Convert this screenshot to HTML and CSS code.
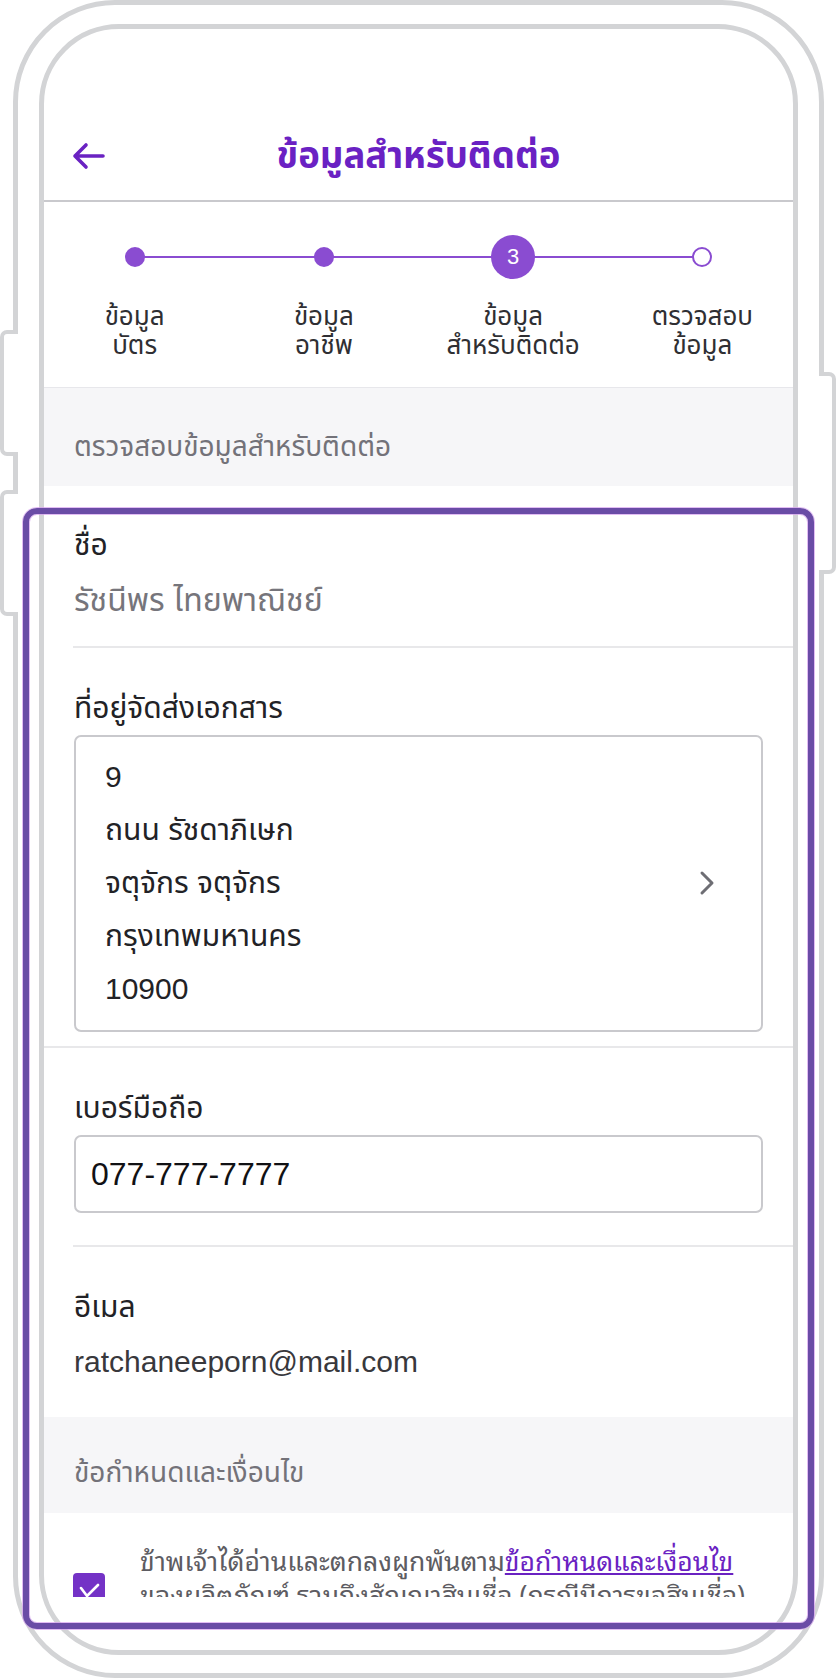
FILE: index.html
```html
<!DOCTYPE html>
<html lang="th">
<head>
<meta charset="utf-8">
<title>ข้อมูลสำหรับติดต่อ</title>
<link rel="stylesheet" href="styles.css">
</head>
<body>
<div class="stage">
  <div class="btn btn-left btn-l1"></div>
  <div class="btn btn-left btn-l2"></div>
  <div class="btn btn-right btn-r1"></div>
  <div class="phone">
    <div class="screen">
      <div class="content">
        <header class="header">
          <div class="header-row">
            <div class="back">
              <svg width="34" height="28" viewBox="0 0 34 28" aria-hidden="true">
                <path d="M3 14 H31 M14 3 L3 14 L14 25" fill="none" stroke="#6a22c2" stroke-width="3.6" stroke-linecap="round" stroke-linejoin="round"/>
              </svg>
            </div>
            <h1 class="title">ข้อมูลสำหรับติดต่อ</h1>
            <div></div>
          </div>
        </header>

        <section class="stepper">
          <div class="steps">
            <div class="step">
              <div class="dot-wrap"><span class="dot done"></span></div>
              <div class="step-label">ข้อมูล<br>บัตร</div>
            </div>
            <div class="step">
              <div class="dot-wrap"><span class="dot done"></span></div>
              <div class="step-label">ข้อมูล<br>อาชีพ</div>
            </div>
            <div class="step">
              <div class="dot-wrap"><span class="dot current">3</span></div>
              <div class="step-label">ข้อมูล<br>สำหรับติดต่อ</div>
            </div>
            <div class="step">
              <div class="dot-wrap"><span class="dot todo"></span></div>
              <div class="step-label">ตรวจสอบ<br>ข้อมูล</div>
            </div>
          </div>
        </section>

        <div class="section-head first">ตรวจสอบข้อมูลสำหรับติดต่อ</div>

        <div class="field field-name">
          <div class="label">ชื่อ</div>
          <div class="value muted">รัชนีพร ไทยพาณิชย์</div>
        </div>

        <div class="field field-address">
          <div class="label">ที่อยู่จัดส่งเอกสาร</div>
          <div class="address-box">
            <div class="address-lines">
              <div>9</div>
              <div>ถนน รัชดาภิเษก</div>
              <div>จตุจักร จตุจักร</div>
              <div>กรุงเทพมหานคร</div>
              <div>10900</div>
            </div>
            <svg class="chev" width="18" height="26" viewBox="0 0 18 26" aria-hidden="true">
              <path d="M4 3 L14 13 L4 23" fill="none" stroke="#6e6e74" stroke-width="3" stroke-linecap="round" stroke-linejoin="round"/>
            </svg>
          </div>
        </div>

        <div class="field field-phone">
          <div class="label">เบอร์มือถือ</div>
          <div class="input-box">077-777-7777</div>
        </div>

        <div class="field field-email">
          <div class="label">อีเมล</div>
          <div class="value dark">ratchaneeporn@mail.com</div>
        </div>

        <div class="section-head second">ข้อกำหนดและเงื่อนไข</div>

        <div class="terms">
          <span class="checkbox">
            <svg width="32" height="32" viewBox="0 0 32 32" aria-hidden="true">
              <path d="M8 15 L14 23 L25 12" fill="none" stroke="#ffffff" stroke-width="2.6" stroke-linecap="round" stroke-linejoin="round"/>
            </svg>
          </span>
          <p class="terms-text">ข้าพเจ้าได้อ่านและตกลงผูกพันตาม<a href="#" class="link">ข้อกำหนดและเงื่อนไข</a><br>ของผลิตภัณฑ์ รวมถึงสัญญาสินเชื่อ (กรณีมีการขอสินเชื่อ)</p>
        </div>
      </div>
      <div class="home-space"></div>
    </div>
  </div>
  <div class="highlight"></div>
</div>
</body>
</html>
```

FILE: styles.css
```css
html, body {
  margin: 0;
  padding: 0;
  background: #ffffff;
}
body {
  width: 837px;
  height: 1680px;
  overflow: hidden;
  font-family: "Liberation Sans", "Noto Sans Thai", "Noto Sans", sans-serif;
  color: #2a2a2e;
}
.stage {
  position: relative;
  width: 837px;
  height: 1680px;
}
.phone {
  position: relative;
  margin-left: 13px;
  width: 811px;
  height: 1678px;
  box-sizing: border-box;
  border: 5px solid #d3d4d6;
  border-radius: 102px;
  padding: 19px 21px 18px 21px;
  background: #ffffff;
}
.btn {
  position: absolute;
  z-index: 2;
  background: #ffffff;
  box-sizing: border-box;
  border: 4px solid #d3d4d6;
}
.btn-left {
  left: 0;
  width: 18px;
  border-right: none;
  border-radius: 7px 0 0 7px;
}
.btn-l1 { top: 330px; height: 126px; }
.btn-l2 { top: 490px; height: 126px; }
.btn-right {
  left: 819px;
  width: 17px;
  border-left: none;
  border-radius: 0 7px 7px 0;
}
.btn-r1 { top: 372px; height: 202px; }

.screen {
  height: 1631px;
  box-sizing: border-box;
  border: 5px solid #d3d4d6;
  border-radius: 80px;
  overflow: hidden;
  background: #ffffff;
}
.content {
  height: 1568px;
  overflow: hidden;
}
.home-space { height: 53px; }

/* header */
.header {
  height: 173px;
  box-sizing: border-box;
  padding-top: 101px;
  border-bottom: 2px solid #c9c9cd;
}
.header-row {
  display: grid;
  grid-template-columns: 1fr auto 1fr;
  align-items: center;
  height: 52px;
}
.back {
  padding-left: 28px;
  display: flex;
  align-items: center;
}
.title {
  margin: 0;
  font-size: 36.5px;
  font-weight: 700;
  color: #6a21c3;
  line-height: 52px;
}

/* stepper */
.stepper {
  height: 186px;
  box-sizing: border-box;
  padding-top: 33px;
  border-bottom: 1px solid #e7e7eb;
}
.steps {
  position: relative;
  display: grid;
  grid-template-columns: repeat(4, 1fr);
  margin: 0 -4px;
}
.steps::before {
  content: "";
  position: absolute;
  left: 12.5%;
  right: 12.5%;
  top: 21px;
  height: 2px;
  background: #8a4cd1;
}
.step {
  display: flex;
  flex-direction: column;
  align-items: center;
}
.dot-wrap {
  position: relative;
  height: 44px;
  display: flex;
  align-items: center;
  justify-content: center;
}
.dot {
  display: flex;
  align-items: center;
  justify-content: center;
  box-sizing: border-box;
  border-radius: 50%;
}
.dot.done {
  width: 20px;
  height: 20px;
  background: #8a4cd1;
}
.dot.current {
  width: 44px;
  height: 44px;
  background: #8a4cd1;
  color: #ffffff;
  font-size: 22px;
}
.dot.todo {
  width: 20px;
  height: 20px;
  background: #ffffff;
  border: 2px solid #8a4cd1;
}
.step-label {
  margin-top: 23px;
  text-align: center;
  font-size: 26px;
  line-height: 29px;
  color: #2f2f33;
}

/* section heads */
.section-head {
  background: #f6f6f8;
  color: #737279;
  font-size: 28px;
  line-height: 36px;
  padding-left: 30px;
}
.section-head.first {
  height: 98px;
  box-sizing: border-box;
  padding-top: 41px;
}
.section-head.second {
  height: 96px;
  box-sizing: border-box;
  padding-top: 38px;
}

/* fields */
.field {
  padding-left: 30px;
}
.label {
  font-size: 30px;
  line-height: 36px;
  color: #222226;
}
.value {
  font-size: 30px;
  line-height: 36px;
}
.value.muted { color: #76757b; font-size: 32px; }
.value.dark { color: #38383c; }

.field-name {
  height: 162px;
  box-sizing: border-box;
  padding-top: 41px;
  position: relative;
}
.field-name .value { margin-top: 19px; }
.field-name::after,
.field-phone::after {
  content: "";
  position: absolute;
  left: 29px;
  right: 0;
  bottom: 0;
  height: 2px;
  background: #e8e8ea;
}
.field-address {
  height: 400px;
  box-sizing: border-box;
  padding-top: 42px;
  border-bottom: 2px solid #e8e8ea;
}
.address-box {
  margin-top: 9px;
  width: 689px;
  height: 297px;
  box-sizing: border-box;
  border: 2px solid #c9c9cd;
  border-radius: 7px;
  padding: 13px 45px 14px 29px;
  display: flex;
  align-items: center;
  justify-content: space-between;
  font-size: 30px;
  line-height: 53px;
  color: #222226;
}
.address-lines { align-self: stretch; }
.field-phone {
  height: 199px;
  box-sizing: border-box;
  padding-top: 42px;
  position: relative;
}
.input-box {
  margin-top: 9px;
  width: 689px;
  height: 78px;
  box-sizing: border-box;
  border: 2px solid #c9c9cd;
  border-radius: 7px;
  padding-left: 15px;
  display: flex;
  align-items: center;
  font-size: 32px;
  color: #111114;
}
.field-email {
  height: 170px;
  box-sizing: border-box;
  padding-top: 42px;
}
.field-email .value { margin-top: 19px; }

/* terms */
.terms {
  display: flex;
  align-items: flex-start;
  padding: 29px 0 0 29px;
}
.checkbox {
  flex: none;
  width: 32px;
  height: 24px;
  margin-top: 31px;
  overflow: hidden;
  background: #7432c6;
  border-radius: 4px 4px 0 0;
  display: block;
}
.checkbox svg { display: block; }
.terms-text {
  margin: 0 0 0 35px;
  font-family: "Noto Sans Thai Looped", "Liberation Sans", "Noto Sans Thai", sans-serif;
  font-size: 26.5px;
  line-height: 34px;
  color: #5d5c62;
  white-space: nowrap;
}
.link {
  color: #6a22c2;
  text-decoration: underline;
}

/* annotation overlay */
.highlight {
  position: absolute;
  z-index: 3;
  left: 23px;
  top: 508px;
  width: 791px;
  height: 1121px;
  box-sizing: border-box;
  border: 6px solid #6a4ca6;
  border-radius: 14px;
  box-shadow: 0 0 0 1px rgba(214, 160, 240, 0.7), inset 0 0 0 1px rgba(214, 160, 240, 0.7);
  pointer-events: none;
}
```
